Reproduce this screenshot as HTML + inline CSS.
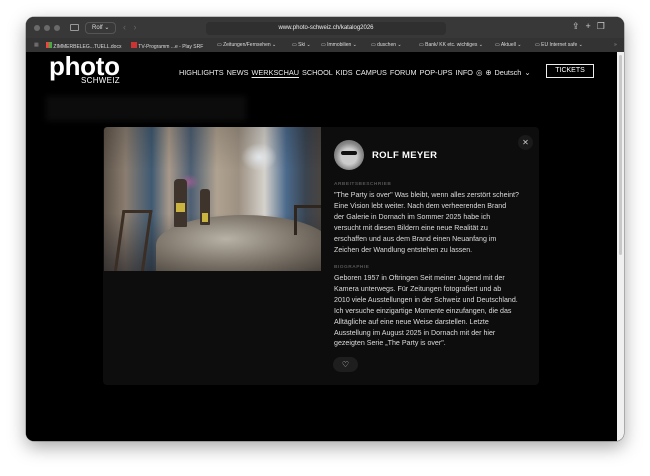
<!DOCTYPE html>
<html><head><meta charset="utf-8">
<style>
*{margin:0;padding:0;box-sizing:border-box}
body{width:650px;height:476px;background:#fff;font-family:"Liberation Sans",sans-serif;position:relative;overflow:hidden}
.win{position:absolute;left:26px;top:17px;width:598px;height:424px;background:#000;border-radius:8px;overflow:hidden;box-shadow:0 6px 18px rgba(0,0,0,.35),0 0 0 .5px rgba(0,0,0,.4)}
.tb{position:absolute;left:0;top:0;width:100%;height:21px;background:#383838}
.bm{position:absolute;left:0;top:21px;width:100%;height:14px;background:#333;font-size:5px;color:#ddd;white-space:nowrap}
.bm span{position:absolute;top:4px}
.dot{position:absolute;top:8px;width:6px;height:6px;border-radius:50%;background:#6a6a6a}
.url{position:absolute;left:180px;top:5px;width:240px;height:13px;border-radius:4px;background:#2f2f2f;color:#eee;font-size:6px;text-align:center;line-height:13px}
.prof{position:absolute;left:59px;top:5px;width:31px;height:12px;border:1px solid #555;border-radius:4px;color:#ddd;font-size:6px;line-height:10px;padding-left:6px}
.content{position:absolute;left:0;top:35px;width:591px;height:389px;background:#000}
.sb{position:absolute;right:0;top:35px;width:7px;height:389px;background:#f0f0f0}
.sb i{position:absolute;left:2px;top:3px;width:3px;height:200px;background:#c8c8c8;border-radius:2px}
.logo{position:absolute;left:23px;top:-1px;color:#fff;font-weight:bold;font-size:26px;letter-spacing:-0.3px}
.logo2{position:absolute;left:55px;top:24px;color:#fff;font-size:8px;letter-spacing:.3px}
.nav{position:absolute;left:153px;top:16px;color:#eee;font-size:7.3px;white-space:nowrap;word-spacing:1px}
.nav u{text-underline-offset:2px}
.tick{position:absolute;left:520px;top:12px;width:48px;height:14px;border:1px solid #eee;color:#fff;font-size:7px;text-align:center;line-height:12px}
.ghost{position:absolute;left:20px;top:44px;width:200px;height:25px;background:#0c0c0c;filter:blur(3px)}
.modal{position:absolute;left:77px;top:75px;width:436px;height:258px;background:#0d0d0d;border-radius:4px;overflow:hidden}
.img{position:absolute;left:1px;top:0;width:217px;height:144px;border-radius:3px 0 0 0;overflow:hidden;
background:
radial-gradient(ellipse 18px 14px at 155px 30px,rgba(230,235,240,.9),transparent),
radial-gradient(ellipse 10px 8px at 85px 55px,rgba(200,90,160,.6),transparent),
linear-gradient(180deg,rgba(0,0,0,.15),transparent 30%,transparent 60%,rgba(30,30,35,.6)),
linear-gradient(90deg,#5e5349 0%,#8a7d70 10%,#3f5a72 22%,#a8998a 30%,#4d5f73 40%,#b0a290 52%,#9d9182 62%,#d5d2cc 74%,#4b6a8c 84%,#3a4450 93%,#4a4440 100%)}
.img .t{position:absolute;left:52px;top:88px;width:175px;height:60px;border-radius:50% 50% 0 0;background:radial-gradient(ellipse at 40% 40%,#b8b1a5,#7a7267 50%,#3c3631)}
.img .b1{position:absolute;left:70px;top:52px;width:13px;height:48px;background:#3e342b;border-radius:4px 4px 1px 1px}
.img .b1:after,.img .b2:after{content:"";position:absolute;left:2px;top:24px;right:2px;height:9px;background:#c9b440}
.img .b2{position:absolute;left:96px;top:62px;width:10px;height:36px;background:#3e342b;border-radius:3px 3px 1px 1px}
.img .c{position:absolute;left:14px;top:83px;width:30px;height:64px;border:3px solid #3a2e25;border-bottom:none;transform:skewX(-8deg)}
.img .c2{position:absolute;left:190px;top:78px;width:30px;height:30px;border:3px solid #2e261f;border-bottom:none}
.x{position:absolute;right:6px;top:8px;width:15px;height:15px;border-radius:50%;background:#1a1a1a;color:#ccc;font-size:8px;text-align:center;line-height:15px}
.av{position:absolute;left:231px;top:13px;width:30px;height:30px;border-radius:50%;background:radial-gradient(circle at 50% 55%,#ccc 0 35%,#888 60%,#555);overflow:hidden}
.av:after{content:"";position:absolute;left:7px;top:11px;width:16px;height:4px;background:#111;border-radius:2px}
.name{position:absolute;left:269px;top:23px;color:#fff;font-weight:bold;font-size:9.5px;letter-spacing:.3px}
.lab{position:absolute;left:231px;color:#555;font-size:4.8px;font-weight:bold;letter-spacing:.5px}
.txt{position:absolute;left:231px;width:205px;color:#ddd;font-size:7.1px;line-height:10.9px;white-space:nowrap}
.heart{position:absolute;left:230px;top:230px;width:25px;height:15px;border-radius:8px;background:#1e1e1e;color:#ddd;font-size:8px;text-align:center;line-height:15px}
</style></head><body>
<div class="win">
 <div class="tb">
  <div class="dot" style="left:8px"></div><div class="dot" style="left:18px"></div><div class="dot" style="left:28px"></div>
  <div style="position:absolute;left:44px;top:7px;width:9px;height:7px;border:1px solid #999;border-radius:1px"></div>
  <div class="prof">Rolf ⌄</div>
  <div style="position:absolute;left:97px;top:5px;color:#666;font-size:9px">‹ &nbsp; ›</div>
  <div class="url">www.photo-schweiz.ch/katalog2026</div>
  <div style="position:absolute;left:546px;top:4px;color:#ccc;font-size:9px;letter-spacing:6px">⇪+❐</div>
 </div>
 <div class="bm">
  <span style="left:8px;color:#888">▦</span>
  <span style="left:20px"><b style="display:inline-block;width:6px;height:6px;background:linear-gradient(90deg,#e44 50%,#4a4 50%)"></b> ZIMMERBELEG...TUELL.docx</span>
  <span style="left:105px"><b style="display:inline-block;width:6px;height:6px;background:#c33"></b> TV-Programm ...e - Play SRF</span>
  <span style="left:191px">▭ Zeitungen/Fernsehen ⌄</span>
  <span style="left:266px">▭ Ski ⌄</span>
  <span style="left:295px">▭ Immobilien ⌄</span>
  <span style="left:345px">▭ duschen ⌄</span>
  <span style="left:393px">▭ Bank/ KK etc. wichtiges ⌄</span>
  <span style="left:469px">▭ Aktuell ⌄</span>
  <span style="left:509px">▭ EU Internet safe ⌄</span>
  <span style="left:588px;color:#999">»</span>
 </div>
 <div class="content">
  <div class="logo">photo</div>
  <div class="logo2">SCHWEIZ</div>
  <div class="nav">HIGHLIGHTS NEWS <u>WERKSCHAU</u> SCHOOL KIDS CAMPUS FORUM POP-UPS INFO ◎ ⊕ Deutsch ⌄</div>
  <div class="tick">TICKETS</div>
  <div class="ghost"></div>
  <div class="modal">
   <div class="img"><div class="t"></div><div class="c"></div><div class="c2"></div><div class="b1"></div><div class="b2"></div></div>
   <div class="x">✕</div>
   <div class="av"></div>
   <div class="name">ROLF MEYER</div>
   <div class="lab" style="top:55px">ARBEITSBESCHRIEB</div>
   <div class="txt" style="top:63px">"The Party is over" Was bleibt, wenn alles zerstört scheint?<br>Eine Vision lebt weiter. Nach dem verheerenden Brand<br>der Galerie in Dornach im Sommer 2025 habe ich<br>versucht mit diesen Bildern eine neue Realität zu<br>erschaffen und aus dem Brand einen Neuanfang im<br>Zeichen der Wandlung entstehen zu lassen.</div>
   <div class="lab" style="top:138px">BIOGRAPHIE</div>
   <div class="txt" style="top:146px">Geboren 1957 in Oftringen Seit meiner Jugend mit der<br>Kamera unterwegs. Für Zeitungen fotografiert und ab<br>2010 viele Ausstellungen in der Schweiz und Deutschland.<br>Ich versuche einzigartige Momente einzufangen, die das<br>Alltägliche auf eine neue Weise darstellen. Letzte<br>Ausstellung im August 2025 in Dornach mit der hier<br>gezeigten Serie „The Party is over".</div>
   <div class="heart">♡</div>
  </div>
 </div>
 <div class="sb"><i></i></div>
</div>
</body></html>
